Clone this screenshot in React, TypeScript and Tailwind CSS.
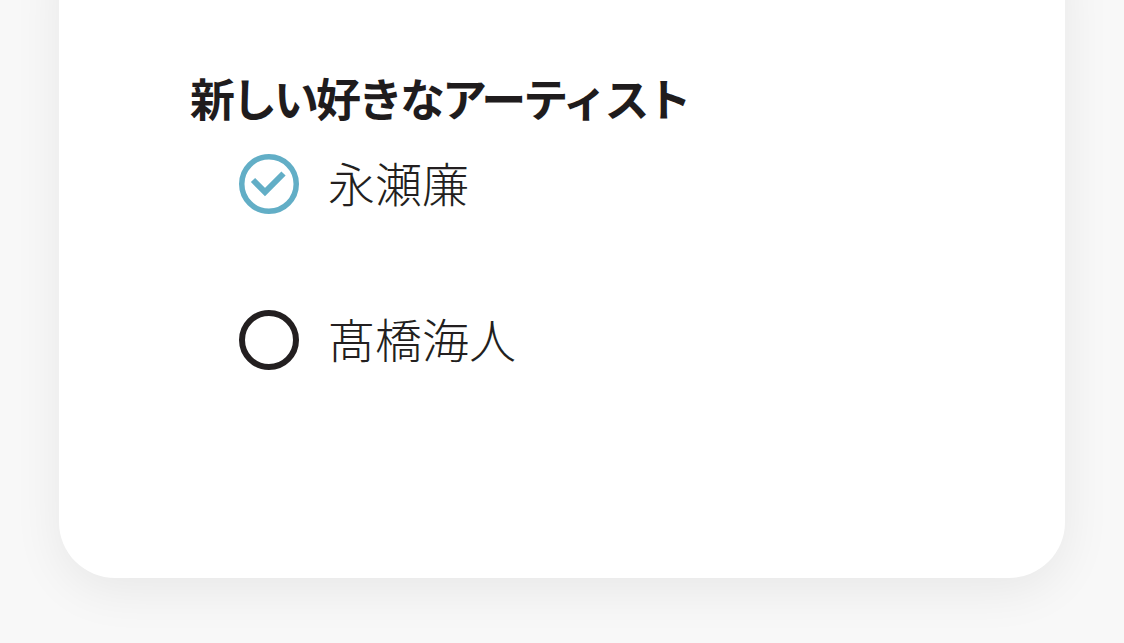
const artists = [
  { name: '永瀬廉', checked: true },
  { name: '髙橋海人', checked: false },
]

function CheckCircle() {
  return (
    <svg width="62" height="62" viewBox="0 0 62 62" fill="none">
      <circle cx="31" cy="31" r="27.25" stroke="#62aec6" strokeWidth="5.5" />
      <path d="M15 27 L27 39 L45.5 20.5" stroke="#62aec6" strokeWidth="6" strokeLinejoin="miter" />
    </svg>
  )
}

function EmptyCircle() {
  return (
    <svg width="62" height="62" viewBox="0 0 62 62" fill="none">
      <circle cx="31" cy="31" r="27" stroke="#231f20" strokeWidth="6" />
    </svg>
  )
}

export default function App() {
  return (
    <div className="min-h-[643px] w-full overflow-hidden bg-[#f8f8f8] font-['Noto_Sans_CJK_JP','Noto_Sans',sans-serif]">
      <div className="mx-[59px] -mt-[80px] h-[658px] rounded-[56px] bg-white pt-[155px] pl-[131px] shadow-[0_12px_50px_rgba(0,0,0,0.07)]">
        <h2 className="text-[45px] font-bold leading-none tracking-[-3px] text-[#1f1c1d]">新しい好きなアーティスト</h2>
        <ul className="mt-[33px] ml-[48px] flex flex-col gap-[94px]">
          {artists.map((a) => (
            <li key={a.name} className="flex h-[62px] items-center">
              {a.checked ? <CheckCircle /> : <EmptyCircle />}
              <span className="ml-[28px] pb-[5px] text-[47px] font-light leading-none text-[#231f20]">{a.name}</span>
            </li>
          ))}
        </ul>
      </div>
    </div>
  )
}
